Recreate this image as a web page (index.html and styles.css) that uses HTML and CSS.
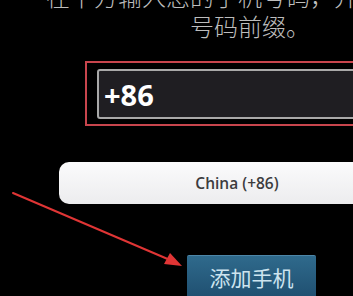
FILE: index.html
```html
<!DOCTYPE html>
<html lang="zh-CN">
<head>
<meta charset="utf-8">
<title>添加手机</title>
<link rel="stylesheet" href="styles.css">
</head>
<body>
<div class="page">
  <p class="intro">在下方输入您的手机号码，并包括国家<br>号码前缀。</p>
  <div class="field-highlight">
    <div class="phone-input">+86</div>
  </div>
  <div class="country-select">China (+86)</div>
  <div class="add-button">添加手机</div>
  <svg class="arrow" width="353" height="296" viewBox="0 0 353 296" aria-hidden="true">
    <line x1="13" y1="193" x2="170" y2="260" stroke="#e03535" stroke-width="2" stroke-linecap="round"/>
    <polygon points="182,266 164,264 170,253" fill="#e03535"/>
  </svg>
</div>
</body>
</html>
```

FILE: styles.css
```css
html, body {
  margin: 0;
  padding: 0;
  background: #000;
}

body {
  width: 353px;
  height: 296px;
  overflow: hidden;
}

.page {
  position: relative;
  width: 353px;
  height: 296px;
  overflow: hidden;
  display: flex;
  flex-direction: column;
  align-items: flex-start;
}

.intro {
  margin: -19px 0 0 46px;
  width: 408px;
  flex-shrink: 0;
  text-align: center;
  white-space: nowrap;
  font-family: "Noto Sans CJK SC", "Noto Sans", sans-serif;
  font-weight: 300;
  font-size: 24px;
  line-height: 30px;
  color: #bdbdbd;
}

.field-highlight {
  margin: 20px 0 0 85px;
  flex-shrink: 0;
  width: 420px;
  box-sizing: border-box;
  border: 2px solid #c8454d;
  padding: 6px 0 5px 10px;
}

.phone-input {
  box-sizing: border-box;
  height: 50px;
  border: 2px solid #a9a9a9;
  border-radius: 3px;
  background: #1f1e22;
  padding-left: 5px;
  display: flex;
  align-items: center;
  font-family: "Open Sans", "Noto Sans", sans-serif;
  font-weight: 700;
  font-size: 29px;
  color: #fff;
}

.country-select {
  margin: 36px 0 0 59px;
  flex-shrink: 0;
  width: 356px;
  height: 42px;
  border-radius: 10px;
  background: linear-gradient(#fbfbfc, #ececee);
  display: flex;
  align-items: center;
  justify-content: center;
  font-family: "Open Sans", "Noto Sans", sans-serif;
  font-weight: 600;
  font-size: 15.5px;
  color: #3c3c3e;
}

.add-button {
  margin: 51px 0 0 187px;
  flex-shrink: 0;
  box-sizing: border-box;
  width: 129px;
  height: 46px;
  border-radius: 2px;
  border-top: 1px solid #4d86a8;
  background: linear-gradient(#2f6a8c, #1e4d6e);
  padding-top: 7px;
  text-align: center;
  font-family: "Noto Sans CJK SC", "Noto Sans", sans-serif;
  font-size: 21px;
  line-height: 28px;
  color: #cde4ef;
}

.arrow {
  position: absolute;
  left: 0;
  top: 0;
  pointer-events: none;
}
```
